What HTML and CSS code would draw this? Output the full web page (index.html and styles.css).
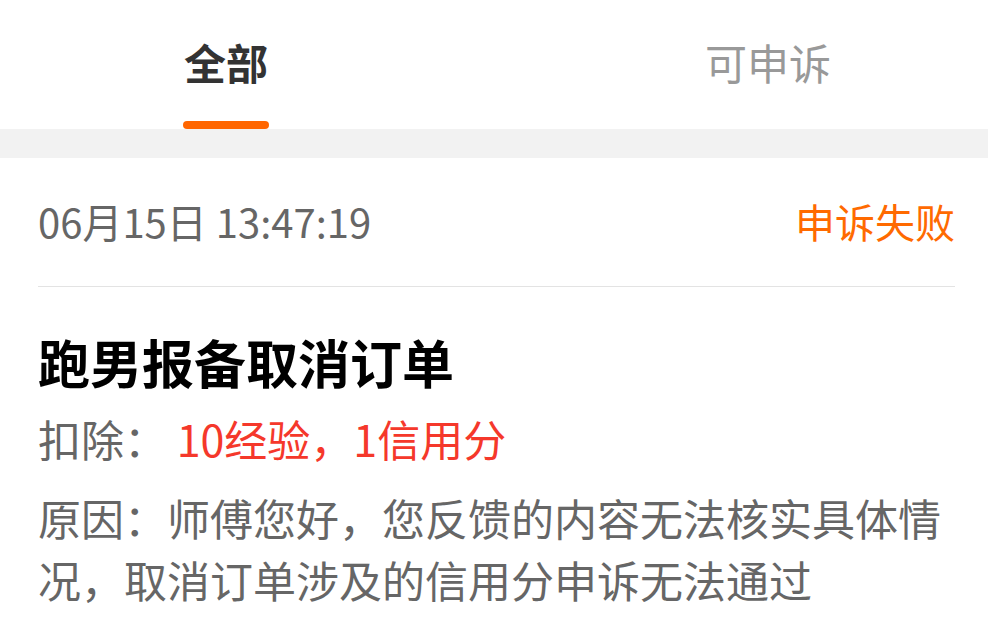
FILE: index.html
```html
<!DOCTYPE html>
<html lang="zh-CN">
<head>
  <meta charset="UTF-8" />
  <meta name="viewport" content="width=device-width, initial-scale=1" />
  <title>申诉记录</title>
  <link rel="stylesheet" href="styles.css">
</head>
<body>

  <div class="tabs">
    <div class="tab active">
      <span class="tab-label">全部</span>
      <span class="tab-line"></span>
    </div>
    <div class="tab">
      <span class="tab-label">可申诉</span>
      <span class="tab-line"></span>
    </div>
  </div>

  <div class="band"></div>

  <div class="record">
    <div class="record-head">
      <span class="record-time">06月15日 13:47:19</span>
      <span class="record-status">申诉失败</span>
    </div>

    <div class="record-body">
      <div class="record-title">跑男报备取消订单</div>
      <div class="record-deduct">
        <span class="label">扣除：</span>
        <span class="deduct-value">10经验，1信用分</span>
      </div>
      <div class="record-reason">原因：师傅您好，您反馈的内容无法核实具体情况，取消订单涉及的信用分申诉无法通过</div>
    </div>
  </div>

</body>
</html>
```

FILE: styles.css
```css
* {
  box-sizing: border-box;
}

body {
  margin: 0;
  background-color: #fff;
  font-family: "Noto Sans CJK SC", "Noto Sans", sans-serif;
  overflow: hidden;
}

.tabs {
  display: flex;
  justify-content: space-between;
  height: 129px;
  padding: 0 157px 0 183px;
}

.tab {
  display: flex;
  flex-direction: column;
  align-items: center;
  justify-content: flex-end;
}
.tab-label {
  font-size: 42px;
  line-height: 60px;
  color: #999;
  margin-bottom: 29px;
}
.tab-line {
  width: 86px;
  height: 8px;
  border-radius: 4px;
  background-color: transparent;
}
.tab.active .tab-label {
  color: #333;
  font-weight: bold;
}
.tab.active .tab-line {
  background-color: #ff6600;
}

.band {
  height: 29px;
  background-color: #f2f2f2;
}

.record {
  padding: 0 33px 0 38px;
}

.record-head {
  display: flex;
  justify-content: space-between;
  align-items: center;
  height: 129px;
  padding-bottom: 3px;
  border-bottom: 1px solid #e3e3e3;
}
.record-time {
  font-size: 40px;
  color: #666;
}
.record-status {
  font-size: 40px;
  color: #ff6a00;
}

.record-body {
  padding-top: 39px;
}
.record-title {
  font-size: 52px;
  line-height: 72px;
  font-weight: bold;
  color: #000;
}
.record-deduct {
  margin-top: 9px;
  font-size: 43px;
  line-height: 62px;
}
.record-deduct .label {
  color: #666;
}
.deduct-value {
  color: #f5382b;
}
.record-reason {
  margin-top: 17px;
  font-size: 43px;
  line-height: 62px;
  color: #666;
}
```
